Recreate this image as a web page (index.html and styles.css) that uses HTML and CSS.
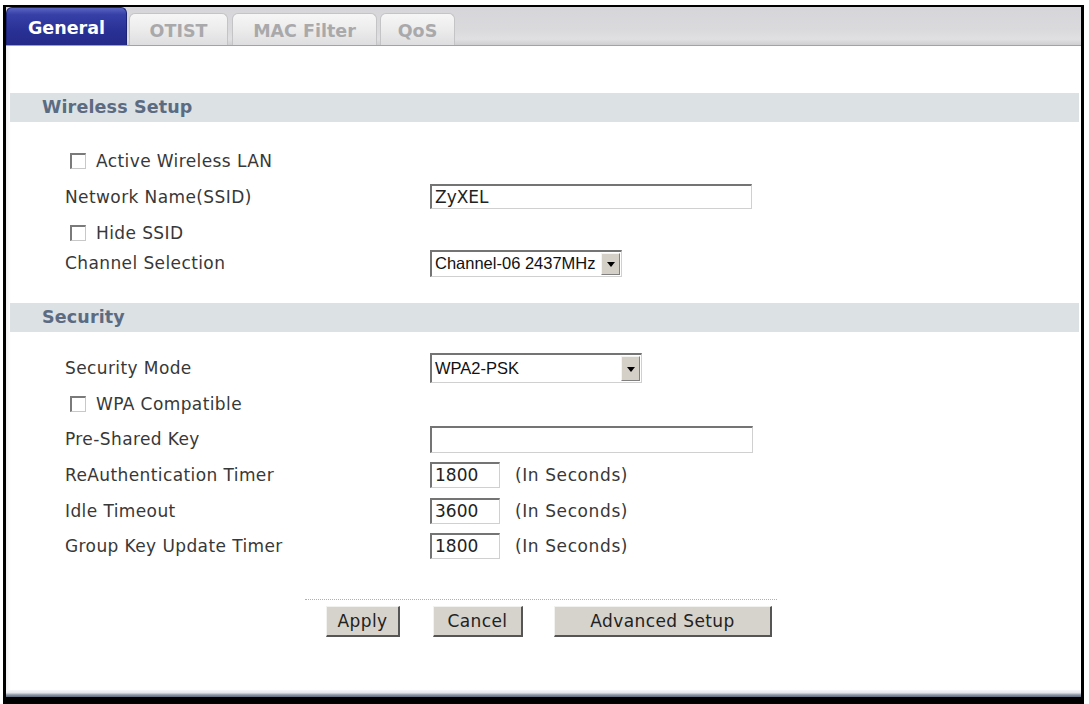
FILE: index.html
```html
<!DOCTYPE html>
<html>
<head>
<meta charset="utf-8">
<link rel="stylesheet" href="styles.css">
</head>
<body>
<div class="page">
  <div class="frame">
    <div class="tabbar">
      <div class="tab active t-general">General</div>
      <div class="tab t-otist">OTIST</div>
      <div class="tab t-mac">MAC Filter</div>
      <div class="tab t-qos">QoS</div>
    </div>
    <div class="content">
      <div class="band band-wireless">Wireless Setup</div>
      <div class="rows rows-wireless">
        <div class="row r-h33"><label class="check"><span class="box"></span>Active Wireless LAN</label></div>
        <div class="row r-h39"><span class="label">Network Name(SSID)</span><span class="field w-ssid">ZyXEL</span></div>
        <div class="row r-h33"><label class="check"><span class="box"></span>Hide SSID</label></div>
        <div class="row r-h28"><span class="label">Channel Selection</span><span class="select w-chan"><span class="sel-text">Channel-06 2437MHz</span><span class="arrow"></span></span></div>
      </div>
      <div class="band band-security">Security</div>
      <div class="rows rows-security">
        <div class="row r-h38"><span class="label">Security Mode</span><span class="select w-mode"><span class="sel-text">WPA2-PSK</span><span class="arrow"></span></span></div>
        <div class="row r-h34"><label class="check"><span class="box"></span>WPA Compatible</label></div>
        <div class="row r-h36"><span class="label">Pre-Shared Key</span><span class="field w-psk"></span></div>
        <div class="row r-h36"><span class="label">ReAuthentication Timer</span><span class="field w-num">1800</span><span class="unit">(In Seconds)</span></div>
        <div class="row r-h36"><span class="label">Idle Timeout</span><span class="field w-num">3600</span><span class="unit">(In Seconds)</span></div>
        <div class="row r-h33"><span class="label">Group Key Update Timer</span><span class="field w-num">1800</span><span class="unit">(In Seconds)</span></div>
      </div>
      <div class="actions">
        <div class="dots"></div>
        <div class="buttons">
          <span class="btn b-apply">Apply</span>
          <span class="btn b-cancel">Cancel</span>
          <span class="btn b-adv">Advanced Setup</span>
        </div>
      </div>
    </div>
    <div class="bottomstrip"></div>
  </div>
</div>
</body>
</html>
```

FILE: styles.css
```css
* { box-sizing: border-box; }
html, body { margin: 0; padding: 0; background: #fff; overflow: hidden; }
body { font-family: "DejaVu Sans", Verdana, sans-serif; font-size: 17px; letter-spacing: 0.4px; color: #383838; }

.page { padding: 5px 0 0 3px; }

.frame {
  width: 1081px;
  height: 700px;
  border-style: solid;
  border-color: #000;
  border-width: 2px 3px 8px 3px;
  display: flex;
  flex-direction: column;
  background: #fff;
}

/* Tabs */
.tabbar {
  height: 39px;
  flex: none;
  display: flex;
  align-items: flex-end;
  background: linear-gradient(#d6d6da 0%, #dadadd 60%, #e0e0e2 85%, #cfcfd2 100%);
  border-bottom: 1px solid #a3a3a6;
}
.tab {
  font-weight: bold;
  font-size: 17.5px;
  letter-spacing: 0;
  display: flex;
  align-items: center;
  justify-content: center;
  border-radius: 6px 6px 0 0;
}
.tab.active {
  height: 38px;
  color: #fff;
  background: linear-gradient(#5a64c2 0%, #3640a6 18%, #2a3196 60%, #232a88 100%);
  border: 1px solid #1c2276;
  border-bottom: none;
  padding-top: 2px;
}
.tab:not(.active) {
  height: 32px;
  color: #a9a9ab;
  background: linear-gradient(#f6f6f7 0%, #ececed 50%, #dedee0 100%);
  border: 1px solid #c4c4c6;
  border-bottom: none;
  padding-top: 2px;
}
.t-general { width: 121px; }
.t-otist { width: 99px; margin-left: 2px; }
.t-mac { width: 145px; margin-left: 4px; }
.t-qos { width: 75px; margin-left: 3px; }

/* Content */
.content {
  flex: 1;
  background: #fff;
  box-shadow: inset 4px 0 4px -3px #e6e6ea;
  padding-top: 47px;
}
.band {
  height: 29px;
  margin: 0 2px 0 4px;
  background: #dce1e4;
  color: #5b6b82;
  font-weight: bold;
  font-size: 17.5px;
  letter-spacing: 0.15px;
  line-height: 29px;
  padding-left: 32px;
}
.rows { padding-left: 59px; }
.rows-wireless { padding-top: 22px; padding-bottom: 26px; }
.rows-security { padding-top: 17px; }

.row { display: flex; align-items: center; }
.r-h28 { height: 28px; }
.r-h33 { height: 33px; }
.r-h34 { height: 34px; }
.r-h36 { height: 36px; }
.r-h38 { height: 38px; }
.r-h39 { height: 39px; }

.label { width: 365px; flex: none; }
.check { display: flex; align-items: center; padding-left: 5px; }
.box {
  width: 16px; height: 16px;
  border-top: 2px solid #7a7a7a;
  border-left: 2px solid #7a7a7a;
  border-right: 1px solid #c8c8c8;
  border-bottom: 1px solid #c8c8c8;
  background: #fff;
  margin-right: 10px;
}

.field {
  height: 26px;
  border-top: 2px solid #747474;
  border-left: 2px solid #747474;
  border-right: 1px solid #d0d0d0;
  border-bottom: 1px solid #d0d0d0;
  background: #fff;
  padding-left: 3px;
  font-size: 17px;
  letter-spacing: 0;
  line-height: 23px;
  color: #222;
}
.w-ssid { width: 322px; height: 25px; }
.w-psk { width: 323px; height: 27px; }
.w-num { width: 70px; }
.unit { margin-left: 15px; letter-spacing: 0.6px; }

.select {
  display: flex;
  align-items: stretch;
  border-top: 2px solid #747474;
  border-left: 2px solid #747474;
  border-right: 1px solid #d0d0d0;
  border-bottom: 1px solid #d0d0d0;
  background: #fff;
  font-family: "Liberation Sans", Arial, sans-serif;
  font-size: 16.5px;
  letter-spacing: 0;
  color: #111;
}
.w-chan { width: 192px; height: 27px; }
.w-mode { width: 212px; height: 30px; }
.sel-text { flex: 1; padding-left: 3px; display: flex; align-items: center; }
.arrow {
  width: 19px;
  margin: 1px 1px 1px 0;
  background: #d4d0c8;
  border-top: 1px solid #f4f4f0;
  border-left: 1px solid #f4f4f0;
  border-right: 1px solid #808080;
  border-bottom: 1px solid #808080;
  position: relative;
}
.arrow::after {
  content: "";
  position: absolute;
  left: 50%; top: 50%;
  margin-left: -4px; margin-top: -2px;
  border-left: 4px solid transparent;
  border-right: 4px solid transparent;
  border-top: 5px solid #000;
}

/* Actions */
.actions { margin: 37px 0 0 299px; width: 472px; }
.dots { border-top: 1px dotted #b0b0b0; }
.buttons { display: flex; padding-left: 21px; margin-top: 6px; }
.btn {
  height: 31px;
  display: flex; align-items: center; justify-content: center;
  background: #d6d3cc;
  border-top: 1px solid #f2f2ee;
  border-left: 1px solid #f2f2ee;
  border-right: 2px solid #555;
  border-bottom: 2px solid #555;
  color: #222;
  font-size: 17px;
}
.b-apply { width: 74px; }
.b-cancel { width: 90px; margin-left: 33px; }
.b-adv { width: 218px; margin-left: 31px; }

.bottomstrip {
  height: 7px;
  flex: none;
  background: linear-gradient(#f6f6f9 0%, #e4e6ea 40%, #8a96a4 70%, #5f6c7c 100%);
}
```
